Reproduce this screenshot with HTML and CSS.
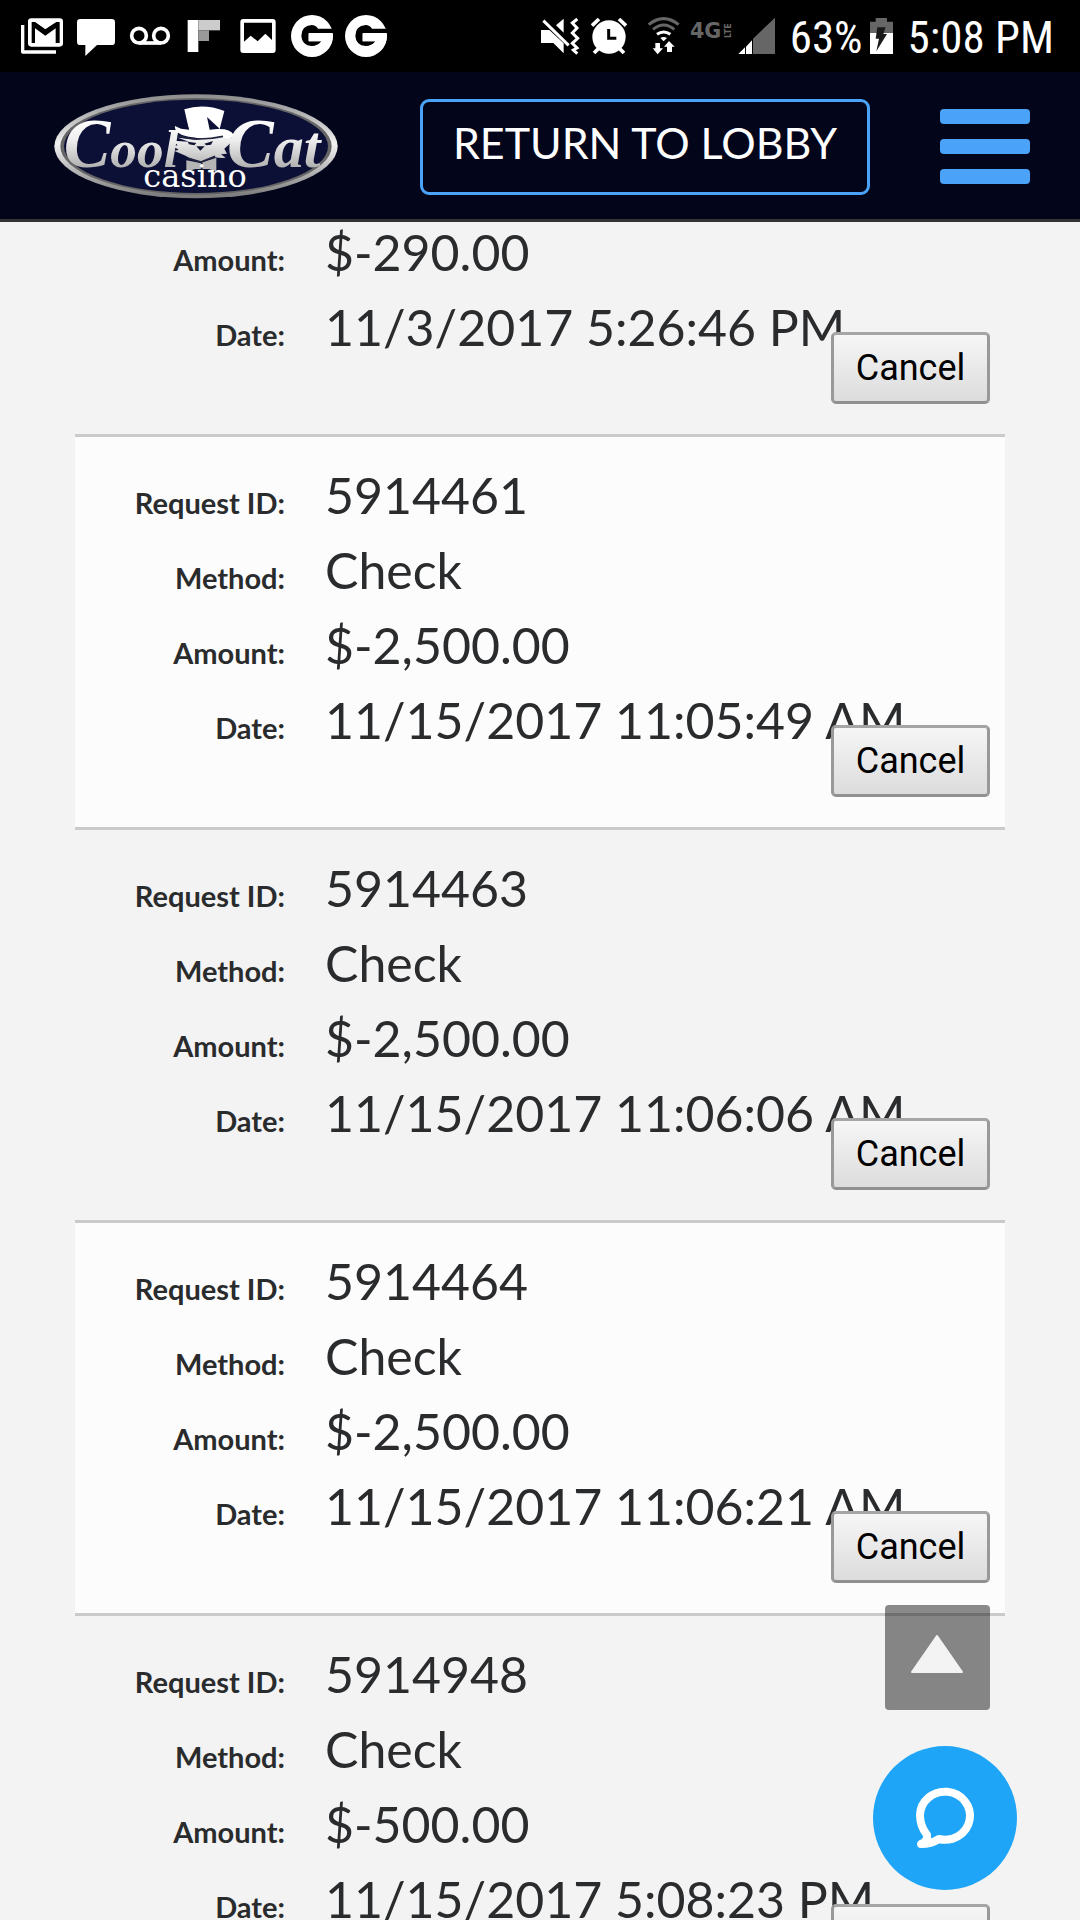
FILE: index.html
```html
<!DOCTYPE html>
<html lang="en">
<head>
<meta charset="utf-8">
<meta name="viewport" content="width=device-width">
<title>Cool Cat Casino</title>
<link rel="stylesheet" href="styles.css">
</head>
<body>
<div class="screen">
  <div class="top">
    <div class="status">
      <div class="status-icons">
        <svg width="54" height="72" viewBox="45 0 162 216"><path d="M68 75V156H168" fill="none" stroke="#fff" stroke-width="10" stroke-linejoin="round"/><rect x="84" y="55" width="105" height="85" rx="10" fill="#fff"/><path d="M95 66H106L136 87L168 66H179V129H167V85L136 107L105 85V129H95Z" fill="#000"/><path d="M106 66H168L136 87Z" fill="#fff"/></svg>
        <svg width="54" height="72" viewBox="207 0 162 216"><path d="M241 57H335Q345 57 345 67V125Q345 135 335 135H291L256 168V135H241Q231 135 231 125V67Q231 57 241 57Z" fill="#fff"/></svg>
        <svg width="54" height="72" viewBox="369 0 162 216"><g fill="none" stroke="#fff" stroke-width="11"><circle cx="417" cy="107" r="22"/><circle cx="483" cy="107" r="22"/><path d="M417 129H483"/></g></svg>
        <svg width="54" height="72" viewBox="531 0 162 216"><path d="M563 60H595V156H563Z" fill="#fff"/><path d="M595 60H660V91H595Z" fill="#ccc"/><path d="M595 91H627V123H595Z" fill="#999"/></svg>
        <svg width="54" height="72" viewBox="693 0 162 216"><rect x="721" y="57" width="106" height="102" rx="9" fill="#fff"/><path d="M732 68H816V120L796 101L773 124L752 107L732 125Z" fill="#000"/></svg>
        <svg width="54" height="72" viewBox="855 0 162 216"><circle cx="936" cy="108" r="63" fill="#fff"/><path d="M1000 86H954Q947 75 935 75Q904 77 904 108Q906 137 935 138Q956 138 964 124H926V99H1000Z" fill="#000"/><path d="M926 101H999Q1000 135 975 156L945 136Q960 134 964 124H926Z" fill="#fff"/></svg>
        <svg width="54" height="72" viewBox="855 0 162 216"><circle cx="936" cy="108" r="63" fill="#fff"/><path d="M1000 86H954Q947 75 935 75Q904 77 904 108Q906 137 935 138Q956 138 964 124H926V99H1000Z" fill="#000"/><path d="M926 101H999Q1000 135 975 156L945 136Q960 134 964 124H926Z" fill="#fff"/></svg>
      </div>
      <div class="status-icons">
        <svg width="44" height="72" viewBox="60 0 132 216"><path d="M63 90H88L131 130V160L100 129H63ZM108 76L131 56V98Z" fill="#fff"/><path d="M70 62L146 136" stroke="#fff" stroke-width="9"/><path d="M172 57L157 69L171 84L157 99L173 115L157 130L171 144L160 150L172 161" fill="none" stroke="#fff" stroke-width="9"/></svg>
        <svg width="50" height="72" viewBox="192 0 150 216"><circle cx="267" cy="111" r="50" fill="#fff"/><path d="M216 77L237 57M318 77L297 57M236 145L222 159M298 145L312 159" stroke="#fff" stroke-width="11"/><path d="M266 87V115H289" fill="none" stroke="#000" stroke-width="9"/></svg>
        <svg width="50" height="72" viewBox="342 0 150 216"><g fill="none" stroke-width="9"><path d="M386 74Q431 38 476 74M399 88Q431 62 463 88" stroke="#666"/><path d="M411 103Q431 89 451 103" stroke="#fff"/></g><path d="M421 114Q431 108 441 114L431 124ZM406 129H420V145H429L413 163L398 145H406ZM441 156V140H432L447 123L464 140H456V156Z" fill="#fff"/></svg>
        <svg class="network" width="51" height="72" viewBox="492 0 153 216"><text x="510" y="113" font-size="62">4G</text><text transform="translate(632 114) rotate(-90)" font-size="24">LTE</text></svg>
        <svg width="45" height="72" viewBox="645 0 135 216"><path d="M699 116L765 53V162H699Z" fill="#666"/><path d="M655 162L675 142V162ZM678 140L696 121V162H678Z" fill="#fff"/></svg>
        <span class="battery-level">63%</span>
        <svg width="24" height="72" viewBox="273 0 72 216"><path d="M273 65H290V54H324V65H342V99H273Z" fill="#666"/><path d="M273 99H342V162H273Z" fill="#fff"/><path d="M295 82H320L313 102H324L292 154L300 116H290Z" fill="#1a1a1a"/></svg>
        <span class="clock">5:08 PM</span>
      </div>
    </div>
    <header class="header">
      <a class="logo" href="#" aria-label="Cool Cat Casino">
        <svg width="284" height="105" viewBox="41 51 852 315">
          <defs>
            <linearGradient id="rim" x1="0" y1="0" x2="0" y2="1"><stop offset="0" stop-color="#8c8c8c"/><stop offset=".48" stop-color="#f2f2f2"/><stop offset="1" stop-color="#777"/></linearGradient>
            <linearGradient id="silver" gradientUnits="userSpaceOnUse" x1="0" y1="130" x2="0" y2="280"><stop offset="0" stop-color="#fff"/><stop offset=".4" stop-color="#eee"/><stop offset="1" stop-color="#aaa"/></linearGradient>
          </defs>
          <ellipse cx="467" cy="208" rx="425" ry="156" fill="url(#rim)"/>
          <ellipse cx="467" cy="208" rx="407" ry="145" fill="#666"/>
          <ellipse cx="467" cy="208" rx="396" ry="140" fill="#0d1036"/>
          <g class="script" fill="url(#silver)">
            <text x="70" y="269" font-size="210">C<tspan font-size="160">ool</tspan></text>
            <text x="560" y="269" font-size="210">C<tspan font-size="180">at</tspan></text>
          </g>
          <path d="M438 250L480 258L528 242V283L505 276H465L438 284Z" fill="#b5b5b5"/>
          <path d="M412 182L446 194L398 191L412 205L398 208L415 218L402 222Q430 233 446 242L482 255L522 240Q538 244 556 242L542 232L560 230L552 215L580 190L560 168L470 188Z" fill="url(#silver)"/>
          <path d="M432 97Q490 78 552 102L538 156Q570 156 580 173Q574 189 545 181Q475 190 425 174Q400 162 404 147L422 155L446 158Z" fill="#fff"/>
          <path d="M420 136L446 158L438 132ZM500 120L538 155L508 158Z" fill="#0d1036"/>
          <path d="M412 176Q470 195 548 178M444 244L482 255L524 238M484 258V281" fill="none" stroke="#20233d" stroke-width="5"/>
          <path d="M442 194L468 198L462 205L446 202ZM492 200L518 192L512 203L498 205ZM468 208H493L480 221Z" fill="#111430"/>
          <text class="casino" x="464" y="331" font-size="96">casino</text>
        </svg>
      </a>
      <button class="lobby" type="button">RETURN TO LOBBY</button>
      <button class="menu" type="button" aria-label="Menu"><span class="bar"></span><span class="bar"></span><span class="bar"></span></button>
    </header>
  </div>
  <main class="requests">
    <section class="request">
      <dl class="fields">
        <div class="field"><dt>Amount:</dt><dd>$-290.00</dd></div>
        <div class="field"><dt>Date:</dt><dd>11/3/2017 5:26:46 PM</dd></div>
      </dl>
      <button class="cancel" type="button">Cancel</button>
    </section>
    <section class="request">
      <dl class="fields">
        <div class="field"><dt>Request ID:</dt><dd>5914461</dd></div>
        <div class="field"><dt>Method:</dt><dd>Check</dd></div>
        <div class="field"><dt>Amount:</dt><dd>$-2,500.00</dd></div>
        <div class="field"><dt>Date:</dt><dd>11/15/2017 11:05:49 AM</dd></div>
      </dl>
      <button class="cancel" type="button">Cancel</button>
    </section>
    <section class="request">
      <dl class="fields">
        <div class="field"><dt>Request ID:</dt><dd>5914463</dd></div>
        <div class="field"><dt>Method:</dt><dd>Check</dd></div>
        <div class="field"><dt>Amount:</dt><dd>$-2,500.00</dd></div>
        <div class="field"><dt>Date:</dt><dd>11/15/2017 11:06:06 AM</dd></div>
      </dl>
      <button class="cancel" type="button">Cancel</button>
    </section>
    <section class="request">
      <dl class="fields">
        <div class="field"><dt>Request ID:</dt><dd>5914464</dd></div>
        <div class="field"><dt>Method:</dt><dd>Check</dd></div>
        <div class="field"><dt>Amount:</dt><dd>$-2,500.00</dd></div>
        <div class="field"><dt>Date:</dt><dd>11/15/2017 11:06:21 AM</dd></div>
      </dl>
      <button class="cancel" type="button">Cancel</button>
    </section>
    <section class="request">
      <dl class="fields">
        <div class="field"><dt>Request ID:</dt><dd>5914948</dd></div>
        <div class="field"><dt>Method:</dt><dd>Check</dd></div>
        <div class="field"><dt>Amount:</dt><dd>$-500.00</dd></div>
        <div class="field"><dt>Date:</dt><dd>11/15/2017 5:08:23 PM</dd></div>
      </dl>
      <button class="cancel" type="button">Cancel</button>
    </section>
  </main>
  <button class="to-top" type="button" aria-label="Back to top"><svg width="105" height="105" viewBox="0 0 105 105"><path d="M52 31L77 67H27Z" fill="#f3f3f3" stroke="#f3f3f3" stroke-width="2" stroke-linejoin="round"/></svg></button>
  <button class="chat" type="button" aria-label="Chat"><svg width="144" height="144" viewBox="0 0 144 144"><path d="M54 89Q47 80 47 69A25 24 0 1 1 66 93Q58 98 48 98Q55 95 54 89Z" fill="none" stroke="#fff" stroke-width="8" stroke-linejoin="round"/></svg></button>
</div>
</body>
</html>
```
FILE: styles.css
```css
* { box-sizing: border-box; }

body {
  margin: 0;
  background: #f3f3f3;
  color: #2a2b2d;
  font-family: Lato, sans-serif;
}

button {
  margin: 0;
  padding: 0;
  border: 0;
  background: none;
}

svg { display: block; }

.screen {
  position: relative;
  height: 100vh;
  overflow: hidden;
}

.top {
  position: relative;
  z-index: 2;
}

.status {
  display: flex;
  justify-content: space-between;
  height: 72px;
  padding: 0 26px 0 15px;
  background: #000;
  color: #fff;
  font: 45px/76px "Roboto Condensed", "Liberation Sans Narrow", Roboto, sans-serif;
}

.status-icons { display: flex; }
.battery-level { margin: 0 7px 0 10px; }
.clock { margin-left: 14px; }

.network {
  fill: #666;
  font-family: "DejaVu Sans", sans-serif;
  font-weight: 700;
}

.header {
  display: flex;
  align-items: center;
  height: 150px;
  padding: 2px 50px 0 54px;
  border-bottom: 3px solid #333;
  background: #03051b;
}

.logo { margin-right: 82px; }

.script {
  font-family: "Liberation Serif", serif;
  font-style: italic;
  font-weight: 700;
}

.casino {
  fill: #fff;
  font-family: "DejaVu Serif", serif;
  text-anchor: middle;
}

.lobby {
  width: 450px;
  height: 96px;
  padding-bottom: 8px;
  border: 3px solid #4aa3f8;
  border-radius: 9px;
  color: #fff;
  font: 43px/48px Lato, sans-serif;
}

.menu {
  display: grid;
  gap: 15px;
  width: 90px;
  margin-left: auto;
}

.bar {
  height: 15px;
  border-radius: 4px;
  background: #4aa3f8;
}

.requests {
  margin-top: -28px;
  padding: 0 75px;
}

.request {
  position: relative;
  padding: 21px 0 69px;
}

.request + .request { border-top: 3px solid #cacaca; }
.request:nth-child(even) { background: #fcfcfc; }

.fields { margin: 0; }

.field {
  display: flex;
  align-items: baseline;
  gap: 40px;
  height: 75px;
}

dt {
  width: 210px;
  font-size: 29px;
  font-weight: 700;
  text-align: right;
}

dd {
  margin: 0;
  font-size: 50px;
  line-height: 75px;
  white-space: nowrap;
}

.cancel {
  position: absolute;
  right: 15px;
  bottom: 30px;
  width: 159px;
  height: 72px;
  border: 3px solid #999;
  border-color: #a5a5a5 #999 #909090;
  border-radius: 5px;
  background: linear-gradient(#f6f6f6, #dcdcdc);
  color: #000;
  font: 36px/42px Roboto, sans-serif;
}

.to-top {
  position: absolute;
  right: 90px;
  bottom: 210px;
  border-radius: 4px;
  background: rgba(0, 0, 0, .45);
}

.chat {
  position: absolute;
  right: 63px;
  bottom: 30px;
  border-radius: 50%;
  background: #1ea5f7;
}
```
